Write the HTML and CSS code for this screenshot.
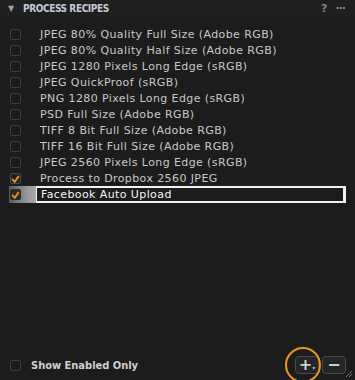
FILE: index.html
```html
<!DOCTYPE html>
<html lang="en">
<head>
  <meta charset="UTF-8">
  <title>Process Recipes</title>
  <link rel="stylesheet" href="styles.css">
</head>
<body>
  <div class="panel">
    <div class="header">
      <span class="arrow">&#9660;</span>
      <span class="title">PROCESS RECIPES</span>
      <span class="tools"><b>?</b> <span class="dots">&middot;&middot;&middot;</span></span>
    </div>

    <div class="list">
      <div class="row"><span class="box"></span><span class="name">JPEG 80% Quality Full Size (Adobe RGB)</span></div>
      <div class="row"><span class="box"></span><span class="name">JPEG 80% Quality Half Size (Adobe RGB)</span></div>
      <div class="row"><span class="box"></span><span class="name">JPEG 1280 Pixels Long Edge (sRGB)</span></div>
      <div class="row"><span class="box"></span><span class="name">JPEG QuickProof (sRGB)</span></div>
      <div class="row"><span class="box"></span><span class="name">PNG 1280 Pixels Long Edge (sRGB)</span></div>
      <div class="row"><span class="box"></span><span class="name">PSD Full Size (Adobe RGB)</span></div>
      <div class="row"><span class="box"></span><span class="name">TIFF 8 Bit Full Size (Adobe RGB)</span></div>
      <div class="row"><span class="box"></span><span class="name">TIFF 16 Bit Full Size (Adobe RGB)</span></div>
      <div class="row"><span class="box"></span><span class="name">JPEG 2560 Pixels Long Edge (sRGB)</span></div>
      <div class="row">
        <span class="box checked">
          <svg width="11" height="11" viewBox="0 0 11 11"><path d="M2 5.5 L4.5 8.5 L9 2" fill="none" stroke="#f39220" stroke-width="2.2" stroke-linecap="round" stroke-linejoin="round"/></svg>
        </span>
        <span class="name">Process to Dropbox 2560 JPEG</span>
      </div>
      <div class="row editing">
        <span class="sel">
          <span class="box checked">
            <svg width="11" height="11" viewBox="0 0 11 11"><path d="M2 5.5 L4.5 8.5 L9 2" fill="none" stroke="#f39220" stroke-width="2.2" stroke-linecap="round" stroke-linejoin="round"/></svg>
          </span>
        </span>
        <span class="field">Facebook Auto Upload</span>
      </div>
    </div>

    <div class="footer">
      <span class="box"></span>
      <span class="show">Show Enabled Only</span>
      <span class="buttons">
        <span class="btn add">+<small>&#9662;</small></span>
        <span class="btn">&minus;</span>
        <span class="ring"></span>
      </span>
      <svg class="grip" width="8" height="8" viewBox="0 0 8 8"><path d="M1 7 L7 1 M4 7 L7 4" stroke="#777" stroke-width="1"/></svg>
    </div>
  </div>
</body>
</html>
```

FILE: styles.css
```css
body {
  margin: 0;
  background: #1c1c1c;
  font-family: "DejaVu Sans", sans-serif;
  color: #c9c9c9;
}

.panel {
  width: 355px;
  height: 380px;
  display: flex;
  flex-direction: column;
  position: relative;
}

.header {
  height: 17px;
  display: flex;
  align-items: center;
  padding: 0 8px 0 8px;
  background: #1f1f1f;
  border-bottom: 1px solid #191919;
  color: #c3cad6;
}

.arrow {
  font-size: 8px;
  color: #9a9ea6;
  width: 15px;
}

.title {
  font-family: "DejaVu Sans Condensed", "DejaVu Sans", sans-serif;
  font-size: 10px;
  font-weight: bold;
  letter-spacing: -0.4px;
  flex: 1;
}

.tools {
  font-size: 11px;
  color: #888;
  display: flex;
  gap: 8px;
  padding-right: 2px;
}

.dots {
  font-weight: bold;
  letter-spacing: -1px;
}

.list {
  padding-top: 8px;
}

.row {
  height: 16px;
  display: flex;
  align-items: center;
  font-size: 11px;
  letter-spacing: 0.4px;
}

.box {
  width: 11px;
  height: 11px;
  box-sizing: border-box;
  border: 1px solid #3e3e3e;
  border-radius: 2px;
  background: #1a1a1a;
  margin-left: 10px;
  margin-right: 19px;
  flex: none;
  display: flex;
}

.box.checked {
  border-color: #4a4a4a;
  background: #222;
}

.name {
  white-space: nowrap;
}

.editing {
  height: 17px;
}

.sel {
  display: flex;
  align-items: center;
  width: 27px;
  height: 17px;
  margin-left: 9px;
  background: linear-gradient(to right, #5a5a5a, #9a9a9a 70%, #a8a8a8);
}

.sel .box {
  margin: 0 0 0 1px;
  background: #2a2a2a;
  border-color: #2a2a2a;
}

.field {
  flex: 1;
  height: 17px;
  box-sizing: border-box;
  margin-right: 9px;
  border: 2px solid #f2f2f2;
  border-right-width: 3px;
  border-left: 1px solid #f2f2f2;
  padding-left: 4px;
  line-height: 13px;
  color: #f4f4f4;
  background: #1c1c1c;
}

.footer {
  margin-top: auto;
  height: 30px;
  display: flex;
  align-items: center;
  position: relative;
}

.footer .box {
  margin-right: 10px;
}

.show {
  font-family: "DejaVu Sans Condensed", "DejaVu Sans", sans-serif;
  font-size: 11px;
  font-weight: bold;
  color: #d0d0d0;
  flex: 1;
}

.buttons {
  display: flex;
  gap: 3px;
  margin-right: 9px;
  position: relative;
}

.btn {
  width: 24px;
  height: 18px;
  box-sizing: border-box;
  border: 1px solid #4a4a4a;
  border-radius: 4px;
  background: #252525;
  color: #cfcfcf;
  font-size: 16px;
  font-weight: bold;
  line-height: 16px;
  text-align: center;
}

.add small {
  font-size: 6px;
  color: #aaa;
}

.ring {
  position: absolute;
  left: -10px;
  top: -9px;
  width: 32px;
  height: 32px;
  border: 2px solid #e8981e;
  border-radius: 50%;
}

.grip {
  position: absolute;
  right: 2px;
  bottom: 2px;
}
```
